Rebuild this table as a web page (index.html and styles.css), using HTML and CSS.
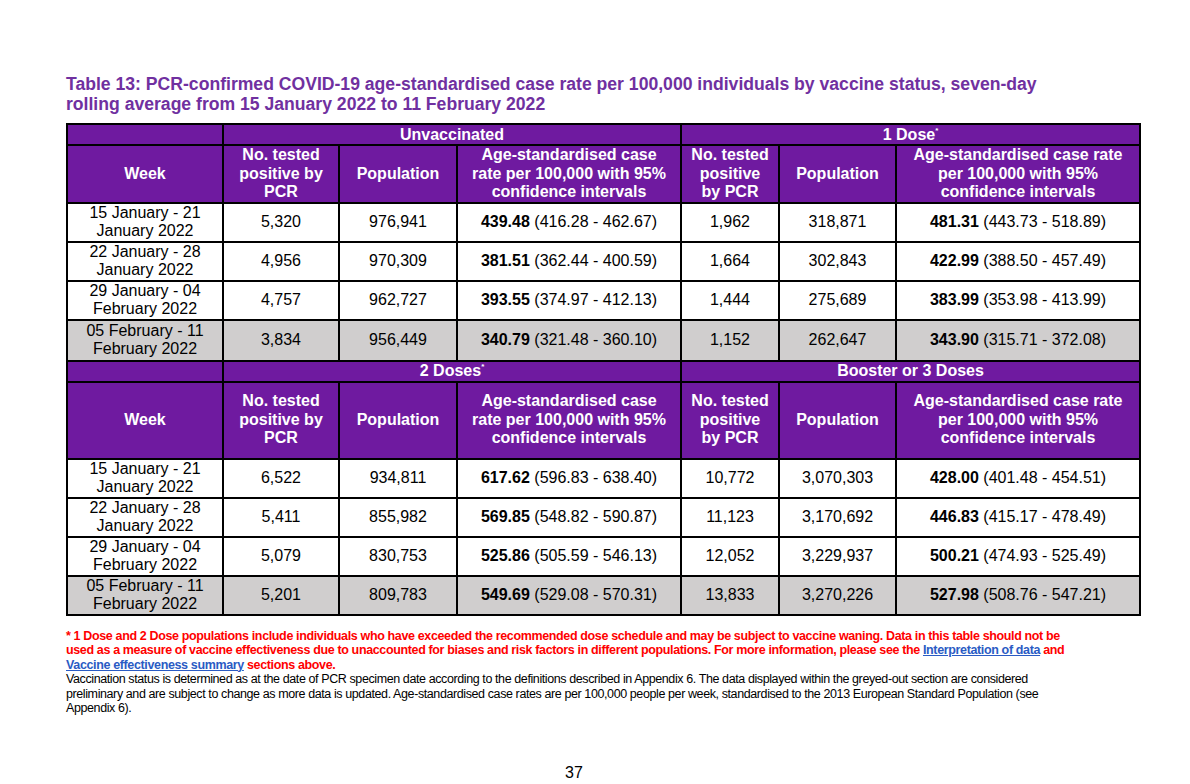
FILE: index.html
```html
<!DOCTYPE html>
<html lang="en">
<head>
<meta charset="utf-8">
<title>Table 13</title>
<link rel="stylesheet" href="styles.css">
</head>
<body>
<main class="page">
  <h1 class="caption">Table 13: PCR-confirmed COVID-19 age-standardised case rate per 100,000 individuals by vaccine status, seven-day rolling average from 15 January 2022 to 11 February 2022</h1>
  <table class="data">
    <colgroup>
      <col class="c-week"><col class="c-num"><col class="c-pop"><col class="c-rate">
      <col class="c-num2"><col class="c-pop2"><col class="c-rate2">
    </colgroup>
    <tbody>
      <tr class="group">
        <th></th>
        <th colspan="3">Unvaccinated</th>
        <th colspan="3">1 Dose<sup>*</sup></th>
      </tr>
      <tr class="head head-a">
        <th>Week</th>
        <th>No. tested positive by PCR</th>
        <th>Population</th>
        <th class="rate-a">Age-standardised case rate per 100,000 with 95% confidence intervals</th>
        <th class="narrow">No. tested positive by PCR</th>
        <th>Population</th>
        <th>Age-standardised case rate per 100,000 with 95% confidence intervals</th>
      </tr>
      <tr class="row row-top">
        <td>15 January - 21 January 2022</td><td>5,320</td><td>976,941</td><td><b>439.48</b> (416.28 - 462.67)</td>
        <td>1,962</td><td>318,871</td><td><b>481.31</b> (443.73 - 518.89)</td>
      </tr>
      <tr class="row row-top">
        <td>22 January - 28 January 2022</td><td>4,956</td><td>970,309</td><td><b>381.51</b> (362.44 - 400.59)</td>
        <td>1,664</td><td>302,843</td><td><b>422.99</b> (388.50 - 457.49)</td>
      </tr>
      <tr class="row row-top">
        <td>29 January - 04 February 2022</td><td>4,757</td><td>962,727</td><td><b>393.55</b> (374.97 - 412.13)</td>
        <td>1,444</td><td>275,689</td><td><b>383.99</b> (353.98 - 413.99)</td>
      </tr>
      <tr class="row grey row-last">
        <td>05 February - 11 February 2022</td><td>3,834</td><td>956,449</td><td><b>340.79</b> (321.48 - 360.10)</td>
        <td>1,152</td><td>262,647</td><td><b>343.90</b> (315.71 - 372.08)</td>
      </tr>
      <tr class="group">
        <th></th>
        <th colspan="3">2 Doses<sup>*</sup></th>
        <th colspan="3">Booster or 3 Doses</th>
      </tr>
      <tr class="head head-b">
        <th>Week</th>
        <th>No. tested positive by PCR</th>
        <th>Population</th>
        <th class="rate-a">Age-standardised case rate per 100,000 with 95% confidence intervals</th>
        <th class="narrow">No. tested positive by PCR</th>
        <th>Population</th>
        <th>Age-standardised case rate per 100,000 with 95% confidence intervals</th>
      </tr>
      <tr class="row">
        <td>15 January - 21 January 2022</td><td>6,522</td><td>934,811</td><td><b>617.62</b> (596.83 - 638.40)</td>
        <td>10,772</td><td>3,070,303</td><td><b>428.00</b> (401.48 - 454.51)</td>
      </tr>
      <tr class="row">
        <td>22 January - 28 January 2022</td><td>5,411</td><td>855,982</td><td><b>569.85</b> (548.82 - 590.87)</td>
        <td>11,123</td><td>3,170,692</td><td><b>446.83</b> (415.17 - 478.49)</td>
      </tr>
      <tr class="row row-short">
        <td>29 January - 04 February 2022</td><td>5,079</td><td>830,753</td><td><b>525.86</b> (505.59 - 546.13)</td>
        <td>12,052</td><td>3,229,937</td><td><b>500.21</b> (474.93 - 525.49)</td>
      </tr>
      <tr class="row row-short grey">
        <td>05 February - 11 February 2022</td><td>5,201</td><td>809,783</td><td><b>549.69</b> (529.08 - 570.31)</td>
        <td>13,833</td><td>3,270,226</td><td><b>527.98</b> (508.76 - 547.21)</td>
      </tr>
    </tbody>
  </table>
  <div class="notes">
    <p class="warn">* 1 Dose and 2 Dose populations include individuals who have exceeded the recommended dose schedule and may be subject to vaccine waning. Data in this table should not be used as a measure of vaccine effectiveness due to unaccounted for biases and risk factors in different populations. For more information, please see the <a href="#">Interpretation of data</a> and <a href="#">Vaccine effectiveness summary</a> sections above.</p>
    <p class="info">Vaccination status is determined as at the date of PCR specimen date according to the definitions described in Appendix 6. The data displayed within the greyed-out section are considered preliminary and are subject to change as more data is updated. Age-standardised case rates are per 100,000 people per week, standardised to the 2013 European Standard Population (see Appendix 6).</p>
  </div>
  <footer class="pageno">37</footer>
</main>
</body>
</html>
```

FILE: styles.css
```css
html, body {
  margin: 0;
  padding: 0;
  background: #ffffff;
}

body {
  font-family: "Liberation Sans", Arial, sans-serif;
  color: #000;
}

.page {
  width: 1190px;
  height: 784px;
  box-sizing: border-box;
  padding: 75px 0 0 66px;
  display: flex;
  flex-direction: column;
  overflow: hidden;
}

.caption {
  margin: 0;
  width: 1000px;
  font-size: 17.6px;
  line-height: 19.5px;
  font-weight: bold;
  color: #7030a0;
}

.data {
  margin-top: 9px;
  width: 1073px;
  table-layout: fixed;
  border-collapse: collapse;
  font-size: 16px;
  line-height: 18.5px;
  text-align: center;
}

.c-week { width: 156px; }
.c-num { width: 116px; }
.c-pop { width: 118px; }
.c-rate { width: 224px; }
.c-num2 { width: 98px; }
.c-pop2 { width: 117px; }
.c-rate2 { width: 244px; }

.data th,
.data td {
  border: 2px solid #000;
  padding: 0 4px;
  vertical-align: middle;
}

.data th {
  background: #6f1aa0;
  color: #fff;
  font-weight: bold;
}

.data th.narrow {
  padding: 0 8px;
}

.data th.rate-a {
  padding: 0 9px;
}

.group th {
  height: 19px;
  line-height: 18px;
}

.group sup {
  font-size: 8px;
  line-height: 0;
  vertical-align: 7px;
}

.head-a th { height: 54px; }
.head-b th { height: 75px; }

.row td { height: 36px; }
.row-top td { height: 37px; }
.row-last td { height: 39px; }
.row-short td { height: 35px; }

.grey td { background: #d0cece; }

.notes {
  margin-top: 13px;
  width: 1010px;
  font-size: 12.5px;
  line-height: 14.5px;
}

.notes p { margin: 0; }

.warn {
  color: #ff0000;
  font-weight: bold;
  letter-spacing: -0.36px;
}

.warn a {
  color: #2a5bc4;
  text-decoration: underline;
}

.info {
  color: #000;
  letter-spacing: -0.4px;
}

.pageno {
  margin-top: auto;
  margin-bottom: 2px;
  padding-left: 499px;
  font-size: 16px;
  line-height: 18px;
}
```
